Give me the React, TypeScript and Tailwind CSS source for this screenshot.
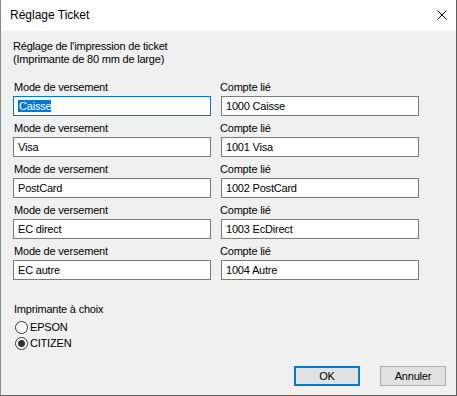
const ROWS = [
  { mode: "Caisse", compte: "1000 Caisse", focused: true },
  { mode: "Visa", compte: "1001 Visa" },
  { mode: "PostCard", compte: "1002 PostCard" },
  { mode: "EC direct", compte: "1003 EcDirect" },
  { mode: "EC autre", compte: "1004 Autre" },
];

function TextBox({ value, focused }: { value: string; focused?: boolean }) {
  return (
    <div
      className={`h-[20px] border bg-white px-[4px] leading-[18px] whitespace-nowrap ${
        focused ? "border-[#0078d7]" : "border-[#7a7a7a]"
      }`}
    >
      {focused ? (
        <span className="bg-[#0078d7] text-white pl-px">{value}</span>
      ) : (
        value
      )}
    </div>
  );
}

function Radio({ label, checked }: { label: string; checked?: boolean }) {
  return (
    <div className="flex h-[16px] items-center">
      <span className="flex h-[13px] w-[13px] items-center justify-center rounded-full border border-[#333] bg-white">
        {checked && <span className="h-[7px] w-[7px] rounded-full bg-[#333]" />}
      </span>
      <span className="ml-[2px]">{label}</span>
    </div>
  );
}

export default function App() {
  return (
    <div className="flex h-[396px] w-[457px] flex-col border-b border-l border-r border-b-[#5e5e5e] border-l-[#8a8a8a] border-r-[#5e5e5e] bg-[#f0f0f0] font-['Liberation_Sans',Arial,sans-serif] text-black">
      {/* Title bar */}
      <div className="flex h-[31px] shrink-0 items-start justify-between bg-white pl-[9px] pr-[9px] pt-[8px]">
        <span className="text-[12px] leading-[14px]">Réglage Ticket</span>
        <svg width="10" height="10" viewBox="0 0 10 10" className="mt-[2px]">
          <path d="M0.5 0.5 L9.5 9.5 M9.5 0.5 L0.5 9.5" stroke="#111" strokeWidth="1" />
        </svg>
      </div>

      {/* Body */}
      <div className="flex flex-1 flex-col pl-[12px] pr-[10px] pt-[9px] text-[11px] leading-[13px] tracking-[-0.2px]">
        <div>
          Réglage de l'impression de ticket
          <br />
          (Imprimante de 80 mm de large)
        </div>

        <div className="mt-[15px] grid grid-cols-[198px_198px] gap-x-[10px] gap-y-[6px]">
          {ROWS.map((r) => (
            <div key={r.mode + r.compte} className="contents">
              <div>
                <div className="mb-[2px] pl-[1px]">Mode de versement</div>
                <TextBox value={r.mode} focused={r.focused} />
              </div>
              <div>
                <div className="mb-[2px] -ml-[1px]">Compte lié</div>
                <TextBox value={r.compte} />
              </div>
            </div>
          ))}
        </div>

        <div className="mt-[23px] pl-[1px]">Imprimante à choix</div>
        <div className="mt-[3px] pl-[2px]">
          <Radio label="EPSON" />
          <Radio label="CITIZEN" checked />
        </div>

        <div className="mt-[15px] flex justify-end gap-[20px]">
          <button
            type="button"
            className="h-[20px] w-[66px] border-2 border-[#0078d7] bg-[#e1e1e1] text-center leading-[16px]"
          >
            OK
          </button>
          <button
            type="button"
            className="h-[20px] w-[66px] border border-[#adadad] bg-[#e1e1e1] text-center leading-[18px]"
          >
            Annuler
          </button>
        </div>
      </div>
    </div>
  );
}
